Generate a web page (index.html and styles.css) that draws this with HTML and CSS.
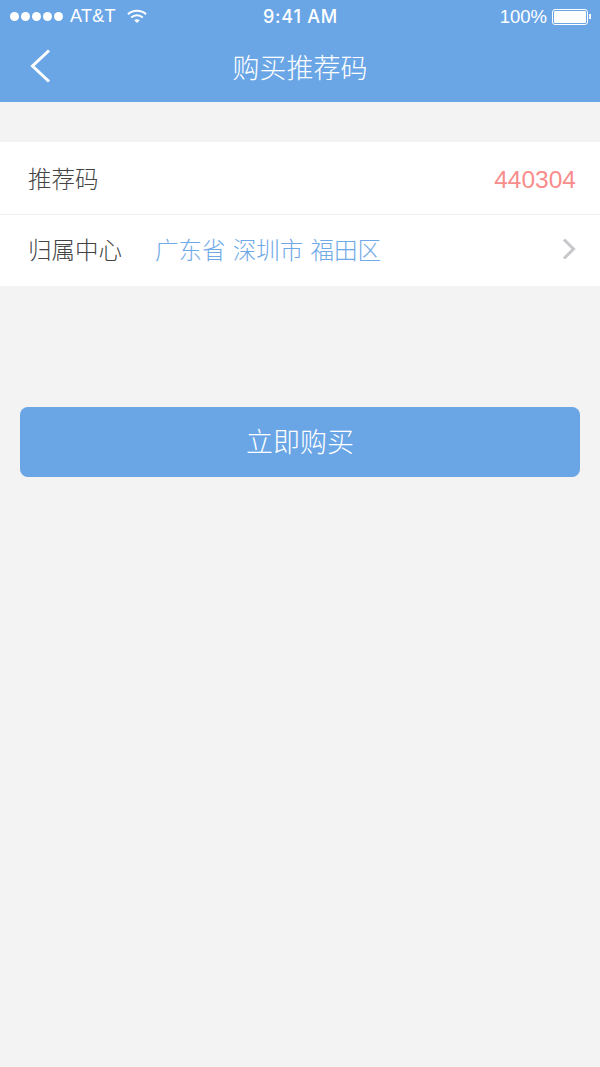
FILE: index.html
```html
<!DOCTYPE html>
<html lang="zh-CN">
<head>
    <meta charset="UTF-8">
    <meta name="viewport" content="width=device-width, initial-scale=1.0, user-scalable=no">
    <title>购买推荐码</title>
    <link rel="stylesheet" href="styles.css">
</head>
<body>

    <header class="header">
        <div class="status-bar">
            <div class="status-left">
                <span class="signal">
                    <i class="dot"></i><i class="dot"></i><i class="dot"></i><i class="dot"></i><i class="dot"></i>
                </span>
                <span class="carrier">AT&amp;T</span>
                <svg class="wifi" width="20" height="15" viewBox="0 0 20 15">
                    <path d="M1 5.2C6 .6 14 .6 19 5.2" fill="none" stroke="#fff" stroke-width="2"/>
                    <path d="M4.2 8.4C7.6 5.4 12.4 5.4 15.8 8.4" fill="none" stroke="#fff" stroke-width="2"/>
                    <path d="M7.2 11.2C8.9 9.9 11.1 9.9 12.8 11.2L10 14Z" fill="#fff"/>
                </svg>
            </div>
            <div class="status-time">9:41 AM</div>
            <div class="status-right">
                <span class="percent">100%</span>
                <span class="battery"><span class="battery-fill"></span></span>
                <span class="battery-tip"></span>
            </div>
        </div>
        <div class="nav-bar">
            <svg class="back" width="24" height="34" viewBox="0 0 24 34">
                <path d="M21 1.5L4.5 17L21 32.5" fill="none" stroke="#fff" stroke-width="3"/>
            </svg>
            <h1 class="title">购买推荐码</h1>
        </div>
    </header>

    <div class="list">
        <div class="row row-border">
            <span class="label">推荐码</span>
            <span class="code">440304</span>
        </div>
        <div class="row row-last">
            <span class="label">归属中心</span>
            <span class="region">广东省 深圳市 福田区</span>
            <svg class="arrow" width="14" height="22" viewBox="0 0 14 22">
                <path d="M2 1.5L11.5 11L2 20.5" fill="none" stroke="#c7c7cc" stroke-width="3"/>
            </svg>
        </div>
    </div>

    <div class="button-container">
        <button class="buy-btn">立即购买</button>
    </div>

</body>
</html>
```

FILE: styles.css
```css
body {
    font-family: "Noto Sans CJK SC", "Liberation Sans", sans-serif;
    font-weight: 300;
    margin: 0;
    height: 1067px;
    overflow: hidden;
    background-color: #f3f3f3;
}
.header {
    height: 102px;
    background-color: #6aa6e6;
    color: white;
}
.status-bar {
    display: grid;
    grid-template-columns: 1fr auto 1fr;
    align-items: center;
    height: 33px;
    padding: 0 9px 0 10px;
    font-family: "Liberation Sans", sans-serif;
    font-size: 18px;
    font-weight: 400;
}
.status-left {
    display: flex;
    align-items: center;
}
.signal {
    display: flex;
    gap: 2px;
}
.dot {
    width: 9px;
    height: 9px;
    border-radius: 50%;
    background-color: white;
}
.carrier {
    margin-left: 7px;
    letter-spacing: .3px;
}
.wifi {
    margin-left: 11px;
}
.status-time {
    font-family: Inter, "Liberation Sans", sans-serif;
    font-size: 18px;
    font-weight: 500;
    letter-spacing: .8px;
}
.status-right {
    display: flex;
    align-items: center;
    justify-content: flex-end;
}
.percent {
    font-size: 18.5px;
}
.battery {
    display: block;
    box-sizing: border-box;
    width: 36px;
    height: 16px;
    margin-left: 5px;
    padding: 1px;
    border: 1px solid white;
    border-radius: 3px;
}
.battery-fill {
    display: block;
    height: 100%;
    border-radius: 1px;
    background-color: white;
}
.battery-tip {
    width: 2px;
    height: 5px;
    margin-left: 1px;
    background-color: white;
}
.nav-bar {
    display: flex;
    align-items: center;
    justify-content: center;
    height: 67px;
    padding-bottom: 2px;
    position: relative;
}
.back {
    position: absolute;
    left: 28px;
    top: 16px;
}
.title {
    margin: 0;
    font-size: 27px;
    font-weight: 300;
}
.list {
    margin-top: 40px;
    background-color: white;
}
.row {
    display: flex;
    align-items: center;
    padding: 0 24px 1px 28px;
    box-sizing: border-box;
    font-size: 23.5px;
}
.row-border {
    height: 73px;
    border-bottom: 1px solid #f0f0f0;
}
.row-last {
    height: 71px;
    padding-bottom: 4px;
}
.label {
    color: #444;
}
.code {
    margin-left: auto;
    padding-top: 4px;
    color: #f98c8c;
    font-family: "Liberation Sans", sans-serif;
    font-size: 24.5px;
    font-weight: 400;
}
.region {
    margin-left: 33px;
    color: #6fa9e8;
    word-spacing: 2px;
}
.arrow {
    margin-left: auto;
}
.button-container {
    padding: 121px 20px 0;
}
.buy-btn {
    display: block;
    width: 100%;
    height: 70px;
    padding: 0 0 3px;
    border: none;
    border-radius: 8px;
    background-color: #6aa6e6;
    color: white;
    font-family: inherit;
    font-size: 27px;
    font-weight: 300;
}
```
